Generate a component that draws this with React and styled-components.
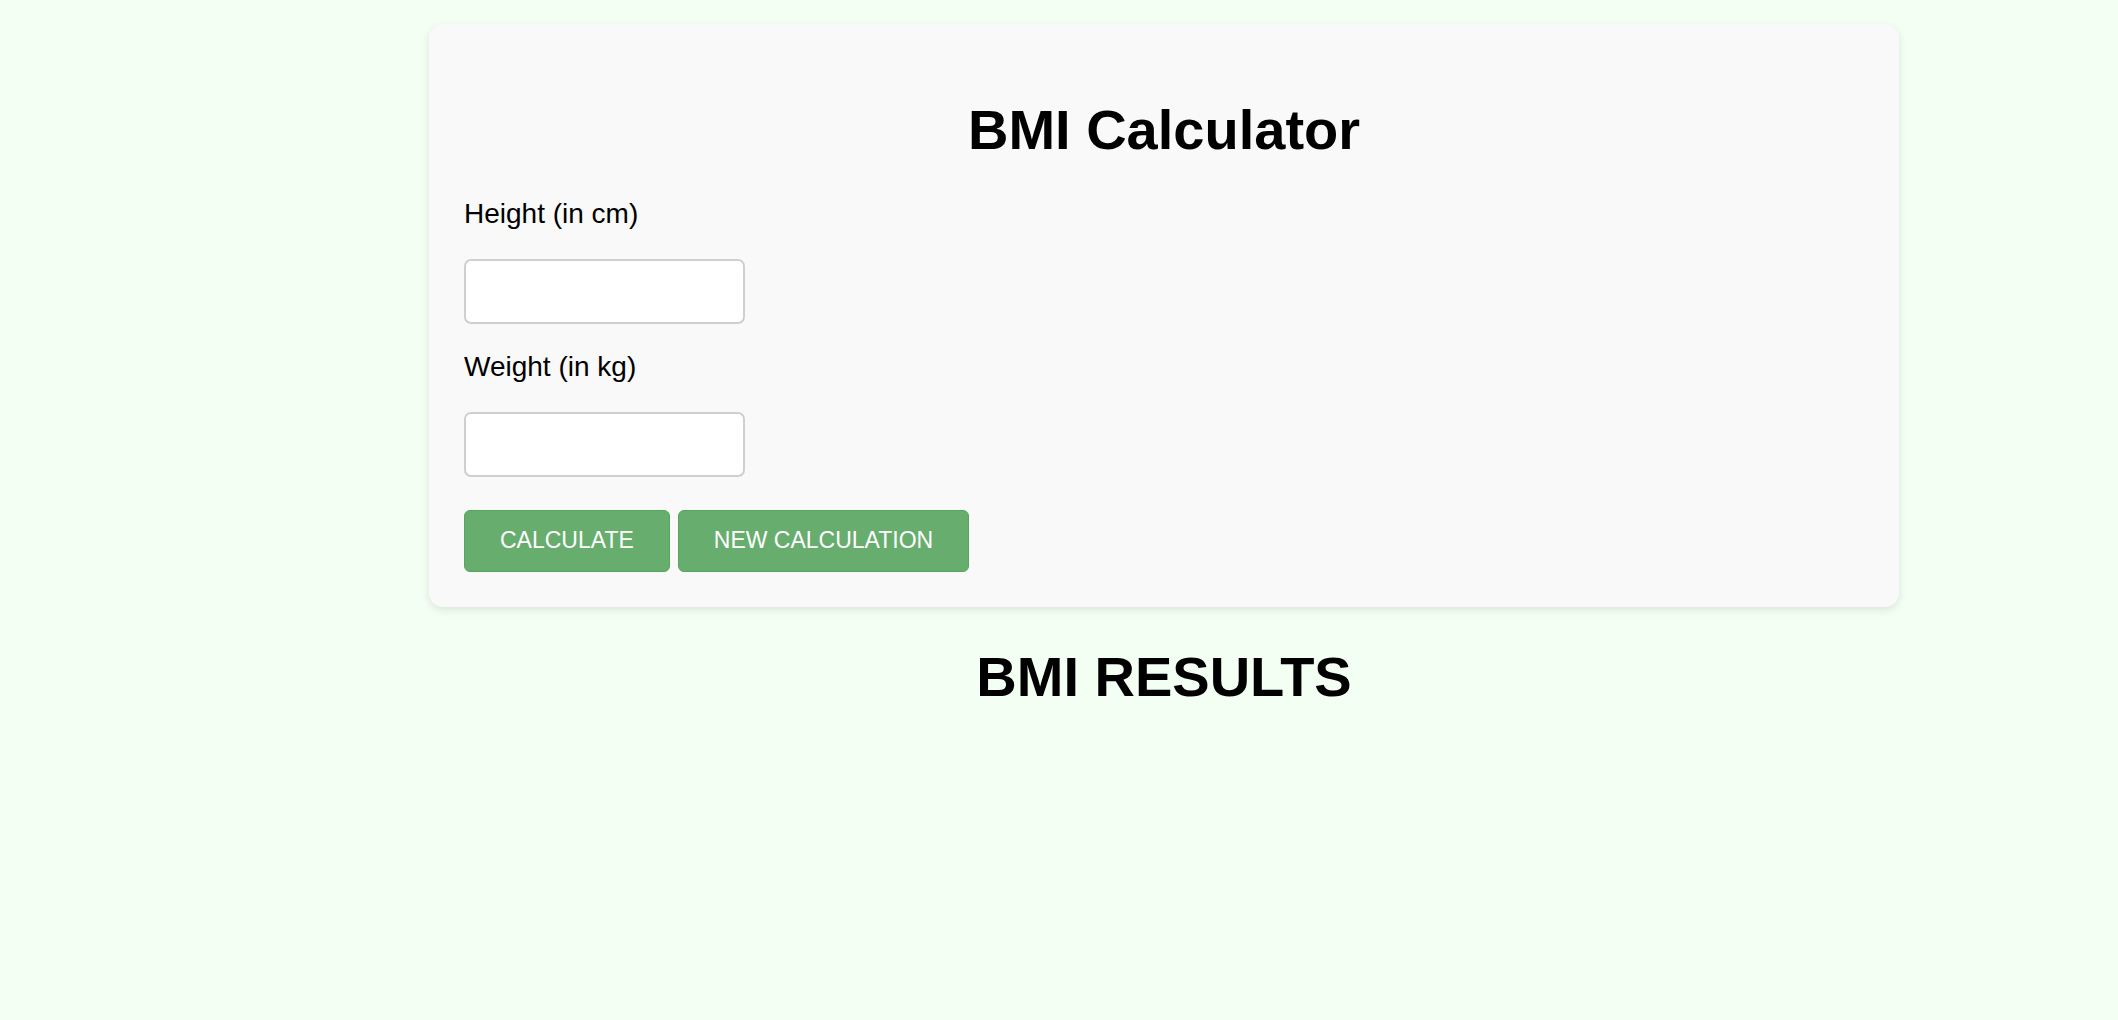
import React from "react";
import styled, { createGlobalStyle } from "styled-components";

const GlobalStyle = createGlobalStyle`
  html, body {
    margin: 0;
    padding: 0;
    background: #f2fff2;
    font-family: "Liberation Sans", Arial, sans-serif;
    color: #000;
  }
`;

const Main = styled.main`
  width: 1470px;
  margin-left: 429px;
  padding-top: 24px;
`;

const Card = styled.section`
  background: #f9f9f9;
  border-radius: 14px;
  padding: 35px;
  box-shadow: 0 3px 8px rgba(0, 0, 0, 0.1);
`;

const Title = styled.h1`
  font-size: 56px;
  font-weight: 700;
  text-align: center;
  margin: ${(p) => (p.$tight ? "37.5px 0 36px" : "37.5px 0")};
  line-height: normal;
`;

const Form = styled.form`
  display: flex;
  flex-direction: column;
  align-items: flex-start;
`;

const Label = styled.label`
  display: block;
  font-size: 28px;
  line-height: 32px;
  margin-bottom: 29px;
`;

const Input = styled.input`
  box-sizing: border-box;
  width: 281px;
  height: 65px;
  border: 2px solid #cfcfcf;
  border-radius: 7px;
  background: #fff;
  margin: 0 0 ${(p) => (p.$last ? "32.5px" : "27.5px")};
  font-size: 23px;
  padding: 0 14px;
  font-family: inherit;
`;

const Buttons = styled.div`
  display: flex;
  gap: 8px;
`;

const Button = styled.button`
  box-sizing: border-box;
  height: 62px;
  padding: 0 35px;
  background: #67ad6e;
  border: 1px solid #55a75b;
  border-radius: 6px;
  color: #fff;
  font-family: "Liberation Sans", Arial, sans-serif;
  font-size: 23px;
  text-transform: uppercase;
  cursor: pointer;
`;

export default function App() {
  return (
    <>
      <GlobalStyle />
      <Main>
        <Card>
          <Title $tight>BMI Calculator</Title>
          <Form onSubmit={(e) => e.preventDefault()}>
            <Label htmlFor="height">Height (in cm)</Label>
            <Input id="height" type="number" />
            <Label htmlFor="weight">Weight (in kg)</Label>
            <Input id="weight" type="number" $last />
            <Buttons>
              <Button type="submit">Calculate</Button>
              <Button type="button">New Calculation</Button>
            </Buttons>
          </Form>
        </Card>
        <Title as="h2">BMI RESULTS</Title>
      </Main>
    </>
  );
}
